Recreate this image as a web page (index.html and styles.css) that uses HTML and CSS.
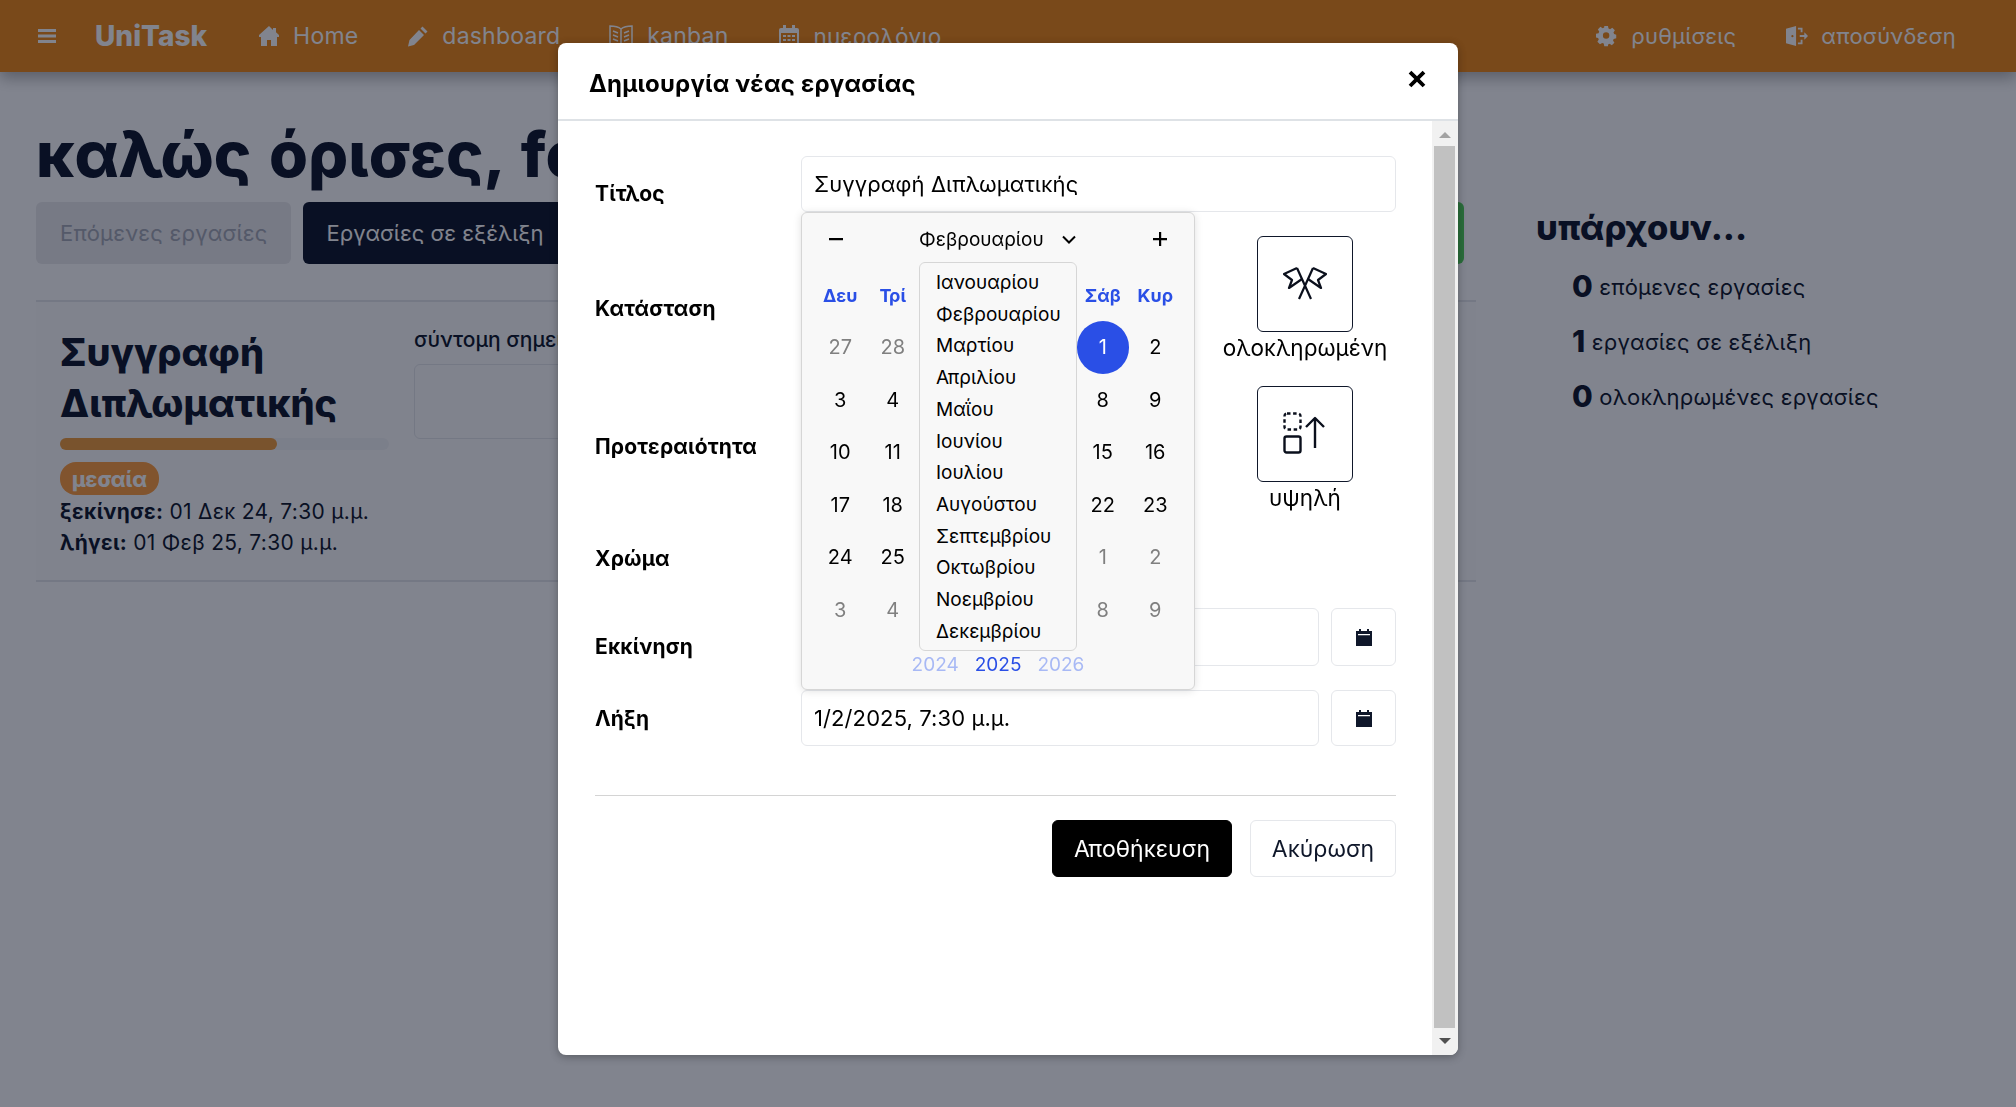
FILE: index.html
```html
<!DOCTYPE html>
<html lang="el">
<head>
    <meta charset="UTF-8">
    <meta name="viewport" content="width=device-width, initial-scale=1"/>
    <title>UniTask</title>
    <link rel="stylesheet" href="styles.css">
</head>
<body>
<nav class="navbar">
    <div class="nav-group">
        <svg class="nav-burger" viewBox="0 0 18 16"><path d="M0 1h18v3H0zM0 6.500h18v3H0zM0 12h18v3H0z"/></svg>
        <span class="brand">UniTask</span>
        <a class="nav-link home">
            <svg class="nav-icon" viewBox="0 0 22 22"><path d="M11 1 1 10v2h2v9h6v-6h4v6h6v-9h2v-2l-3-2.700V3h-3v2z"/></svg>
            Home
        </a>
        <a class="nav-link dash">
            <svg class="nav-icon" viewBox="0 0 22 22"><path d="M15.500 1.500 20.500 6.500 18.500 8.500 13.500 3.500zM12 5l5 5L7 20l-6 1.500L2.500 15z"/></svg>
            dashboard
        </a>
        <a class="nav-link kanban">
            <svg class="nav-icon icon-wide" viewBox="0 0 26 24" fill="none" stroke="currentColor" stroke-width="1.500"><path d="M13 5C10 2.500 6 2 2 2v18c4 0 8 .5 11 3 3-2.500 7-3 11-3V2c-4 0-8 .5-11 3zM13 5v18M5 7l5 2M5 11l5 2M5 15l5 2M21 7l-5 2M21 11l-5 2M21 15l-5 2"/></svg>
            kanban
        </a>
        <a class="nav-link cal">
            <svg class="nav-icon" viewBox="0 0 20 22"><path d="M4 0h3v3h6V0h3v3h2a2 2 0 0 1 2 2v15a2 2 0 0 1-2 2H2a2 2 0 0 1-2-2V5a2 2 0 0 1 2-2h2zM2 8v12h16V8z"/><path d="M4 10h3v2H4zM8.500 10h3v2h-3zM13 10h3v2h-3zM4 14h3v2H4zM8.500 14h3v2h-3zM13 14h3v2h-3z"/></svg>
            ημερολόγιο
        </a>
    </div>
    <div class="nav-group">
        <a class="nav-link settings">
            <svg class="nav-icon" viewBox="0 0 22 22"><path fill-rule="evenodd" d="M9 1h4l.6 2.800 1.700.7 2.400-1.500 2.800 2.800-1.500 2.400.7 1.700 2.300.6v4l-2.800.6-.7 1.700 1.500 2.400-2.800 2.800-2.400-1.500-1.700.7L13 23H9l-.6-2.800-1.700-.7-2.400 1.500-2.800-2.800 1.500-2.400-.7-1.700L0 13.500v-4l2.800-.6.7-1.700L2 4.800 4.800 2l2.400 1.500 1.700-.7zM11 8a3.500 3.500 0 1 0 0 7 3.500 3.500 0 0 0 0-7z" transform="scale(.92)"/></svg>
            ρυθμίσεις
        </a>
        <a class="nav-link logout">
            <svg class="nav-icon" viewBox="0 0 24 22"><path fill-rule="evenodd" d="M0 3 11 0v22L0 19zM7 10a1.200 1.200 0 1 0 0 2.400A1.200 1.200 0 0 0 7 10z"/><path d="M13 2h5v5h-2V4h-3zM13 18h3v-3h2v5h-5zM15 10h5V7l4 4-4 4v-3h-5z"/></svg>
            αποσύνδεση
        </a>
    </div>
</nav>

<main class="page">
    <section class="tasks-col">
        <h1 class="welcome">καλώς όρισες, fo</h1>
        <div class="tabs">
            <div class="tab tab-next">Επόμενες εργασίες</div>
            <div class="tab tab-active">Εργασίες σε εξέλιξη</div>
            <div class="tab tab-done"></div>
        </div>
        <article class="task-card">
            <div class="task-info">
                <h2 class="task-title">Συγγραφή Διπλωματικής</h2>
                <div class="progress"><div class="progress-fill" style="width: 66%"></div></div>
                <span class="badge">μεσαία</span>
                <p class="task-date"><b>ξεκίνησε:</b> 01 Δεκ 24, 7:30 μ.μ.</p>
                <p class="task-date"><b>λήγει:</b> 01 Φεβ 25, 7:30 μ.μ.</p>
            </div>
            <div class="task-notes">
                <div class="notes-label">σύντομη σημείωση</div>
                <div class="notes-box"></div>
            </div>
        </article>
    </section>
    <aside class="stats-col">
        <h2 class="stats-title">υπάρχουν...</h2>
        <p class="stat"><b>0</b> επόμενες εργασίες</p>
        <p class="stat"><b>1</b> εργασίες σε εξέλιξη</p>
        <p class="stat"><b>0</b> ολοκληρωμένες εργασίες</p>
    </aside>
</main>

<div class="backdrop">
    <div class="modal">
        <header class="modal-header">
            <h3 class="modal-title">Δημιουργία νέας εργασίας</h3>
            <svg class="modal-close" viewBox="0 0 16 16"><path d="M3 .6 8 5.600 13 .6 15.400 3l-5 5 5 5-2.400 2.400-5-5-5 5L.6 13l5-5-5-5z"/></svg>
        </header>
        <div class="modal-body">
            <div class="modal-content">
                <form class="task-form">
                    <label class="field-label label-title">Τίτλος</label>
                    <div class="input">Συγγραφή Διπλωματικής</div>

                    <label class="field-label label-status">Κατάσταση</label>
                    <div class="options">
                        <div class="option"><div class="option-box"></div></div>
                        <div class="option"><div class="option-box"></div></div>
                        <div class="option">
                            <div class="option-box">
                                <svg class="option-icon icon-flags" viewBox="0 0 44 34" fill="none" stroke="currentColor" stroke-width="2.200" stroke-linejoin="round"><path d="M14 1 28 32M30 1 16 32"/><path d="M14 1 1 7 9 13 6 21 19 12"/><path d="M30 1 43 7 35 13 38 21 25 12"/></svg>
                            </div>
                            ολοκληρωμένη
                        </div>
                    </div>

                    <label class="field-label label-priority">Προτεραιότητα</label>
                    <div class="options">
                        <div class="option"><div class="option-box"></div></div>
                        <div class="option"><div class="option-box"></div></div>
                        <div class="option">
                            <div class="option-box">
                                <svg class="option-icon" viewBox="0 0 44 44" fill="none" stroke="currentColor" stroke-width="2.400" stroke-linejoin="round"><rect x="1.500" y="1.500" width="16" height="16" rx="2.500" stroke-dasharray="3.500 2.600"/><rect x="1.500" y="24.500" width="16" height="16" rx="2"/><path d="M32 36V6M23 15l9-9 9 9"/></svg>
                            </div>
                            υψηλή
                        </div>
                    </div>

                    <label class="field-label label-color">Χρώμα</label>
                    <div class="swatches">
                        <span class="swatch swatch-a"></span>
                        <span class="swatch swatch-b"></span>
                        <span class="swatch swatch-c"></span>
                    </div>

                    <label class="field-label label-start">Εκκίνηση</label>
                    <div class="date-row">
                        <div class="input"></div>
                        <div class="date-btn">
                            <svg class="cal-icon" viewBox="0 0 16 17"><path fill-rule="evenodd" d="M3 0h2v2h6V0h2v2h3v15H0V2h3zM2 5v1.300h12V5z"/></svg>
                        </div>
                    </div>

                    <label class="field-label label-end">Λήξη</label>
                    <div class="date-row">
                        <div class="input">1/2/2025, 7:30 μ.μ.</div>
                        <div class="date-btn">
                            <svg class="cal-icon" viewBox="0 0 16 17"><path fill-rule="evenodd" d="M3 0h2v2h6V0h2v2h3v15H0V2h3zM2 5v1.300h12V5z"/></svg>
                        </div>
                    </div>
                </form>
                <div class="form-footer">
                    <button class="btn btn-save" type="button">Αποθήκευση</button>
                    <button class="btn btn-cancel" type="button">Ακύρωση</button>
                </div>

                <div class="picker">
                    <div class="picker-head">
                        <span class="picker-step"><svg class="step-icon" viewBox="0 0 14 14"><path d="M0 6h14v2.200H0z"/></svg></span>
                        <span class="picker-month">Φεβρουαρίου
                            <svg class="chevron" viewBox="0 0 14 9" fill="none" stroke="currentColor" stroke-width="2"><path d="m1 1.500 6 6 6-6"/></svg>
                        </span>
                        <span class="picker-step"><svg class="step-icon" viewBox="0 0 14 14"><path d="M0 6h6V0h2.200v6H14v2.200H8.200V14H6V8.200H0z"/></svg></span>
                    </div>
                    <div class="picker-grid picker-days">
                        <span>Δευ</span><span>Τρί</span><span></span><span></span><span></span><span>Σάβ</span><span>Κυρ</span>
                    </div>
                    <div class="picker-grid picker-dates">
                        <span class="muted">27</span><span class="muted">28</span><span></span><span></span><span></span><span class="selected">1</span><span>2</span>
                        <span>3</span><span>4</span><span></span><span></span><span></span><span>8</span><span>9</span>
                        <span>10</span><span>11</span><span></span><span></span><span></span><span>15</span><span>16</span>
                        <span>17</span><span>18</span><span></span><span></span><span></span><span>22</span><span>23</span>
                        <span>24</span><span>25</span><span></span><span></span><span></span><span class="muted">1</span><span class="muted">2</span>
                        <span class="muted">3</span><span class="muted">4</span><span></span><span></span><span></span><span class="muted">8</span><span class="muted">9</span>
                    </div>
                    <div class="picker-years">
                        <span class="year-off">2024</span><span class="year-on">2025</span><span class="year-off">2026</span>
                    </div>
                    <ul class="month-menu">
                        <li>Ιανουαρίου</li>
                        <li>Φεβρουαρίου</li>
                        <li>Μαρτίου</li>
                        <li>Απριλίου</li>
                        <li>Μαΐου</li>
                        <li>Ιουνίου</li>
                        <li>Ιουλίου</li>
                        <li>Αυγούστου</li>
                        <li>Σεπτεμβρίου</li>
                        <li>Οκτωβρίου</li>
                        <li>Νοεμβρίου</li>
                        <li>Δεκεμβρίου</li>
                    </ul>
                </div>
            </div>
            <div class="scrollbar">
                <div class="scroll-btn"><span class="arrow-up"></span></div>
                <div class="scroll-thumb"></div>
                <div class="scroll-btn scroll-btn-end"><span class="arrow-down"></span></div>
            </div>
        </div>
    </div>
</div>
</body>
</html>
```

FILE: styles.css
```css
* {
    box-sizing: border-box;
    font-family: 'Inter', 'Noto Sans', sans-serif;
}

body {
    margin: 0;
    height: 1107px;
    overflow: hidden;
    background-color: #ffffff;
    color: #0f172a;
}

.navbar {
    display: flex;
    justify-content: space-between;
    align-items: center;
    height: 72px;
    padding: 0 60px 0 38px;
    background-color: #ef8816;
    box-shadow: 0 6px 14px rgba(0, 0, 0, 0.3);
    color: #ffffff;
}

.nav-group {
    display: flex;
    align-items: center;
}

.nav-burger {
    width: 18px;
    height: 16px;
    fill: currentColor;
}

.brand {
    margin-left: 39px;
    font-size: 28px;
    font-weight: 800;
}

.nav-link {
    display: flex;
    align-items: center;
    gap: 13px;
    font-size: 22px;
    letter-spacing: 0.2px;
}

.nav-icon {
    width: 22px;
    height: 22px;
    fill: currentColor;
}

.nav-icon.icon-wide {
    width: 26px;
    height: 24px;
    fill: none;
}

.home { margin-left: 51px; font-size: 23px; }
.dash { margin-left: 49px; font-size: 23px; }
.kanban { margin-left: 48px; font-size: 23px; }
.cal { margin-left: 50px; font-size: 22.500px; }
.logout { margin-left: 49px; }
.settings { margin-right: 1px; }

.page {
    display: flex;
    padding: 0 36px;
}

.tasks-col {
    width: 1440px;
    flex-shrink: 0;
}

.welcome {
    margin: 41px 0 7px;
    font-size: 63px;
    line-height: 82px;
    font-weight: 800;
    word-spacing: 4px;
    white-space: nowrap;
}

.tabs {
    display: flex;
    gap: 12px;
    margin-right: 12px;
}

.tab {
    display: flex;
    align-items: center;
    height: 62px;
    padding: 0 23px;
    border-radius: 6px;
    font-size: 22px;
}

.tab-next {
    padding: 0 24px;
    background-color: #ebeaec;
    color: #a4a8b4;
    letter-spacing: 0.2px;
}

.tab-active {
    background-color: #0f172a;
    color: #ffffff;
}

.tab-done {
    flex: 1;
    background-color: #53d258;
}

.task-card {
    display: flex;
    gap: 25px;
    height: 282px;
    margin-top: 36px;
    padding: 25px 24px 0;
    border-top: 2px solid #e5e7eb;
    border-bottom: 2px solid #e5e7eb;
    background-color: #fdfdfd;
}

.task-info {
    width: 329px;
    flex-shrink: 0;
}

.task-title {
    margin: 0;
    font-size: 38px;
    line-height: 51px;
    font-weight: 800;
}

.progress {
    height: 12px;
    margin-top: 9px;
    border-radius: 6px;
    background-color: #f3f4f6;
}

.progress-fill {
    height: 100%;
    border-radius: 6px;
    background-color: #ef9c3c;
}

.badge {
    display: inline-block;
    height: 33px;
    margin-top: 12px;
    padding: 0 12px;
    border-radius: 16px;
    background-color: #ff9e3e;
    color: #ffffff;
    font-size: 21px;
    font-weight: 800;
    line-height: 35px;
}

.task-date {
    margin: 0;
    font-size: 21px;
    letter-spacing: 0.3px;
    line-height: 31px;
    white-space: nowrap;
}

.badge + .task-date {
    margin-top: 1px;
}

.notes-label {
    font-size: 21px;
    font-weight: 500;
    white-space: nowrap;
}

.notes-box {
    height: 75px;
    margin-top: 12px;
    border: 1px solid #e5e7eb;
    border-radius: 6px;
}

.stats-col {
    padding: 134px 0 0 60px;
    white-space: nowrap;
}

.stats-title {
    margin: 0 0 18px;
    font-size: 34.500px;
    line-height: 44px;
    font-weight: 800;
}

.stat {
    margin: 0 0 18px 36px;
    font-size: 22px;
    letter-spacing: 0.2px;
    line-height: 36px;
}

.stat b {
    font-size: 30px;
    font-weight: 800;
    vertical-align: -2px;
}

.backdrop {
    position: fixed;
    inset: 0;
    display: flex;
    justify-content: center;
    align-items: flex-start;
    background-color: rgba(3, 10, 30, 0.5);
}

.modal {
    display: flex;
    flex-direction: column;
    width: 900px;
    height: 1012px;
    margin-top: 43px;
    border-radius: 8px;
    overflow: hidden;
    background-color: #ffffff;
    box-shadow: 0 2px 8px rgba(0, 0, 0, 0.3);
}

.modal-header {
    display: flex;
    justify-content: space-between;
    height: 78px;
    padding: 27px 32px 0 31px;
    border-bottom: 2px solid #dee2e6;
    flex-shrink: 0;
}

.modal-title {
    margin: 0;
    color: #000000;
    font-size: 24px;
    font-weight: 700;
    letter-spacing: 0.2px;
    line-height: 28px;
}

.modal-close {
    width: 18px;
    height: 18px;
    fill: #000000;
}

.modal-body {
    display: flex;
    flex: 1;
    min-height: 0;
}

.modal-content {
    position: relative;
    width: 874px;
    padding: 35px 0 0 37px;
}

.scrollbar {
    display: flex;
    flex-direction: column;
    width: 26px;
    padding-right: 1px;
    background-color: #f1f1f1;
}

.scroll-btn {
    display: flex;
    justify-content: center;
    align-items: center;
    height: 25px;
    padding-top: 2px;
}

.scroll-btn-end {
    height: 27px;
    padding: 0 0 2px;
}

.scroll-thumb {
    flex: 1;
    margin: 0 2px;
    background-color: #c1c1c1;
}

.arrow-up {
    border-right: 6px solid transparent;
    border-bottom: 6px solid #a3a3a3;
    border-left: 6px solid transparent;
}

.arrow-down {
    border-top: 6px solid #505050;
    border-right: 6px solid transparent;
    border-left: 6px solid transparent;
}

.task-form {
    display: grid;
    grid-template-columns: 206px 595px;
    grid-template-rows: 56px 126px 124px 50px 58px 56px;
    row-gap: 24px;
}

.field-label {
    color: #000000;
    font-size: 21px;
    font-weight: 700;
    letter-spacing: 0.15px;
    line-height: 28px;
}

.label-title { padding-top: 24px; }
.label-status { padding-top: 59px; }
.label-priority { padding-top: 47px; }
.label-color { padding-top: 11px; }
.label-start { padding-top: 25px; }
.label-end { padding-top: 15px; }

.input {
    flex: 1;
    height: 100%;
    padding: 0 12px;
    border: 1px solid #e5e7eb;
    border-radius: 6px;
    color: #000000;
    font-size: 22px;
    letter-spacing: 0.1px;
    line-height: 54px;
}

.options {
    display: grid;
    grid-template-columns: repeat(3, 182px);
    justify-content: space-between;
}

.option {
    display: flex;
    flex-direction: column;
    align-items: center;
    gap: 3px;
    color: #000000;
    font-size: 22.500px;
    line-height: 26px;
}

.option-box {
    display: flex;
    justify-content: center;
    align-items: center;
    width: 96px;
    height: 96px;
    border: 1px solid #0f172a;
    border-radius: 6px;
    color: #0a0f1c;
}

.option-icon {
    width: 44px;
    height: 44px;
}

.option-icon.icon-flags {
    height: 34px;
}

.swatches {
    display: flex;
    gap: 16px;
    align-items: center;
}

.swatch {
    width: 36px;
    height: 36px;
    border-radius: 50%;
}

.swatch-a { background-color: #2563eb; }
.swatch-b { background-color: #ef8816; }
.swatch-c { background-color: #16a34a; }

.date-row {
    display: flex;
    gap: 12px;
}

.date-btn {
    display: flex;
    justify-content: center;
    align-items: center;
    width: 65px;
    border: 1px solid #e5e7eb;
    border-radius: 6px;
}

.cal-icon {
    width: 16px;
    height: 17px;
    fill: #0f172a;
}

.form-footer {
    display: flex;
    justify-content: flex-end;
    gap: 18px;
    width: 801px;
    margin-top: 49px;
    padding-top: 24px;
    border-top: 1px solid #d4d4d4;
}

.btn {
    height: 57px;
    border-radius: 6px;
    font-size: 23px;
}

.btn-save {
    width: 180px;
    border: 1px solid #000000;
    background-color: #000000;
    color: #ffffff;
}

.btn-cancel {
    width: 146px;
    border: 1px solid #e5e7eb;
    background-color: #ffffff;
    color: #0f172a;
}

.picker {
    position: absolute;
    top: 91px;
    left: 243px;
    width: 394px;
    height: 478px;
    padding: 0 12px;
    border: 1px solid #d6d6d6;
    border-radius: 6px;
    background-color: #f8f8f8;
    box-shadow: 0 1px 8px rgba(0, 0, 0, 0.12);
    color: #000000;
}

.picker-head {
    display: flex;
    justify-content: space-between;
    align-items: center;
    height: 52px;
    margin: 0 -4px 5px;
}

.picker-step {
    display: flex;
    justify-content: center;
    width: 52.500px;
}

.step-icon {
    width: 14px;
    height: 14px;
}

.picker-month {
    display: flex;
    justify-content: space-between;
    align-items: center;
    width: 158px;
    font-size: 19px;
}

.chevron {
    width: 14px;
    height: 9px;
    margin-right: 1px;
}

.picker-grid {
    display: grid;
    grid-template-columns: repeat(7, 52.500px);
    text-align: center;
}

.picker-days {
    height: 51px;
    color: #2a4fe6;
    font-size: 18px;
    font-weight: 700;
    line-height: 52px;
}

.picker-dates {
    grid-auto-rows: 52.500px;
    font-size: 20px;
    line-height: 53.500px;
}

.picker-dates .muted {
    color: #808080;
}

.picker-dates .selected {
    border-radius: 50%;
    background-color: #2a4fe6;
    color: #ffffff;
}

.picker-years {
    display: flex;
    justify-content: center;
    gap: 16px;
    margin-top: 14px;
    font-size: 19px;
    line-height: 30px;
}

.year-off {
    color: #a8b9f5;
}

.year-on {
    color: #2a4fe6;
}

.month-menu {
    position: absolute;
    top: 49px;
    left: 117px;
    width: 158px;
    height: 389px;
    margin: 0;
    padding: 4px 16px;
    border: 1px solid #d6d6d6;
    border-radius: 6px;
    background-color: #f8f8f8;
    font-size: 19px;
    line-height: 31.700px;
    list-style: none;
}
```
